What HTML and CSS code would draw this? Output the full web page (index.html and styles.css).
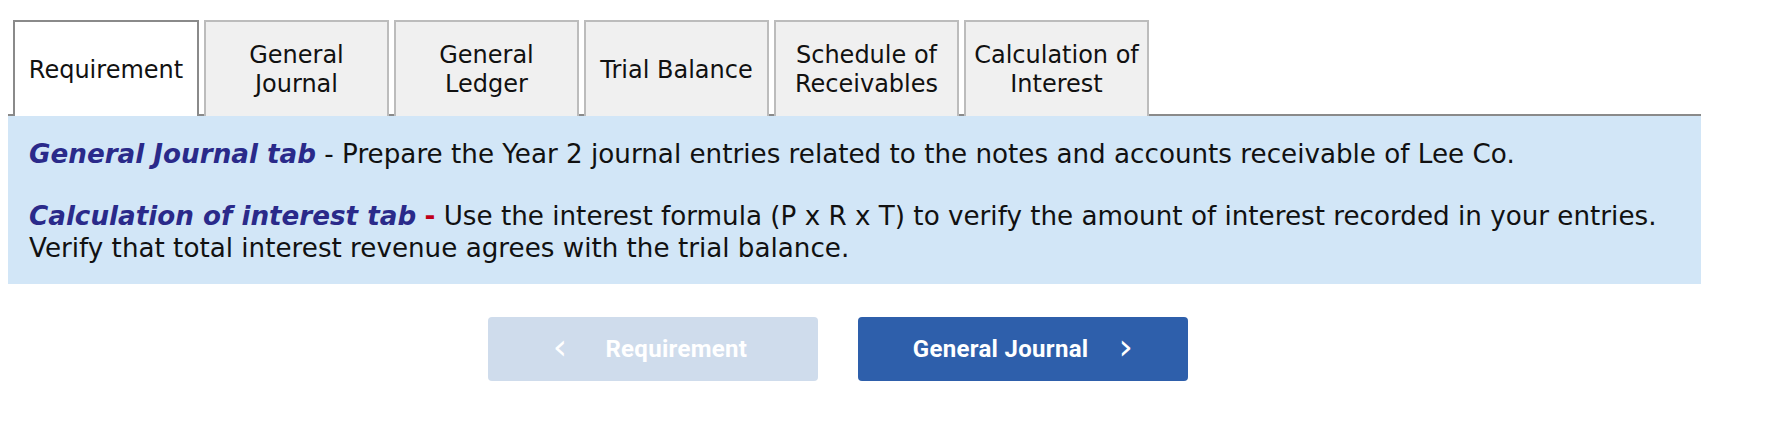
FILE: index.html
```html
<!DOCTYPE html>
<html>
<head>
<meta charset="utf-8">
<link rel="stylesheet" href="styles.css">
</head>
<body>
<div class="wrap">
  <div class="tabs">
    <div class="tab active">Requirement</div>
    <div class="tab">General<br>Journal</div>
    <div class="tab">General<br>Ledger</div>
    <div class="tab">Trial Balance</div>
    <div class="tab">Schedule of<br>Receivables</div>
    <div class="tab">Calculation of<br>Interest</div>
  </div>
  <div class="panel">
    <p class="para"><span class="lead">General Journal tab</span> - Prepare the Year 2 journal entries related to the notes and accounts receivable of Lee Co.</p>
    <p class="para"><span class="lead">Calculation of interest tab</span> <span class="dash">-</span> Use the interest formula (P x R x T) to verify the amount of interest recorded in your entries. Verify that total interest revenue agrees with the trial balance.</p>
  </div>
  <div class="nav">
    <button class="btn prev"><span class="chev">&lsaquo;</span><span>Requirement</span></button>
    <button class="btn next"><span>General Journal</span><span class="chev">&rsaquo;</span></button>
  </div>
</div>
</body>
</html>
```
FILE: styles.css
```css
html, body {
  margin: 0;
  padding: 0;
  background: #ffffff;
}
body {
  padding: 20px 8px 0 8px;
  font-family: "DejaVu Sans", Verdana, sans-serif;
}
.wrap {
  width: 1693px;
}
.tabs {
  display: flex;
  gap: 5px;
  padding-left: 5px;
  border-bottom: 2px solid #8a8a8a;
  height: 94px;
}
.tab {
  box-sizing: border-box;
  width: 185px;
  height: 96px;
  background: #f0f0f0;
  border: 2px solid #bcbcbc;
  border-bottom: none;
  display: flex;
  align-items: center;
  justify-content: center;
  text-align: center;
  font-size: 24px;
  line-height: 29px;
  color: #111;
  padding-top: 2px;
}
.tab.active {
  width: 186px;
  background: #ffffff;
  border-color: #8a8a8a;
  position: relative;
  z-index: 1;
}
.panel {
  background: #d2e6f7;
  padding: 22px 20px 20px 21px;
}
.para {
  margin: 0;
  font-size: 26.2px;
  line-height: 32px;
  color: #111;
}
.para + .para {
  margin-top: 30px;
}
.lead {
  font-weight: bold;
  font-style: italic;
  color: #2a2a8a;
}
.dash {
  font-weight: bold;
  color: #c0001a;
}
.nav {
  display: flex;
  gap: 40px;
  padding-left: 480px;
  margin-top: 33px;
}
.btn {
  box-sizing: border-box;
  width: 330px;
  height: 64px;
  border: none;
  border-radius: 4px;
  color: #ffffff;
  font-family: Roboto, "Liberation Sans", sans-serif;
  font-weight: bold;
  font-size: 24px;
  letter-spacing: 0.3px;
  display: flex;
  align-items: center;
  justify-content: center;
  gap: 34px;
  padding: 0;
}
.btn.prev {
  background: #cfdcec;
  gap: 38px;
  padding-right: 6px;
}
.btn.next {
  background: #2e5fab;
  gap: 30px;
  padding-left: 0;
}
.chev {
  font-family: "DejaVu Sans", sans-serif;
  font-weight: normal;
  font-size: 36px;
  line-height: 1;
  position: relative;
  top: -2px;
}
```
